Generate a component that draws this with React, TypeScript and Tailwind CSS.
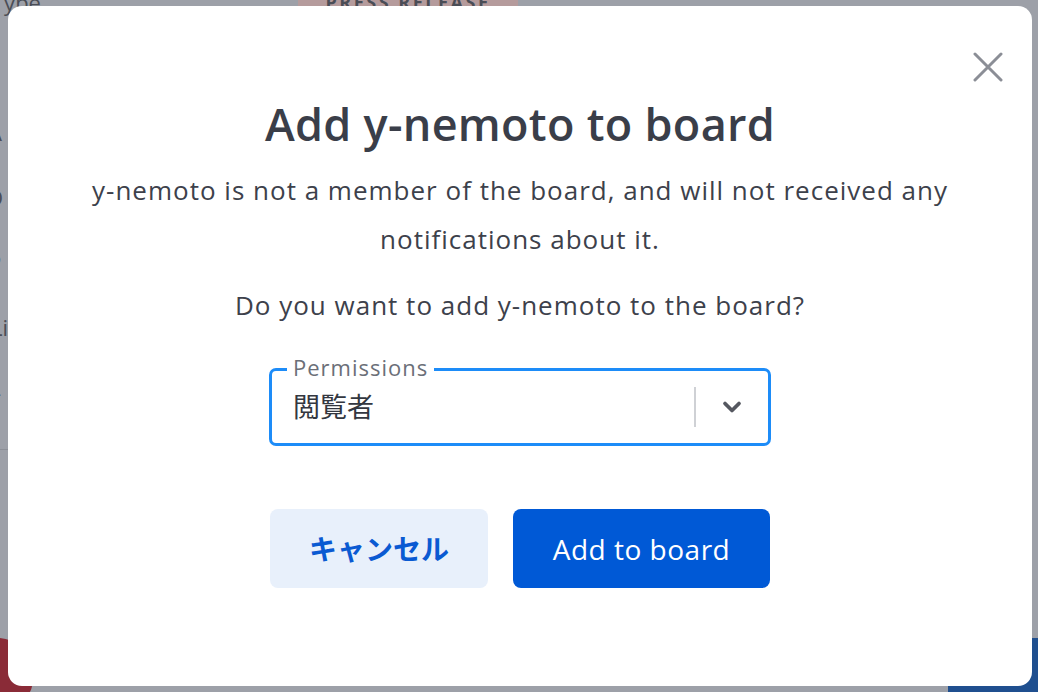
import React from "react";

const fontStack = '"Open Sans", "Noto Sans CJK JP", sans-serif';

function CloseIcon() {
  return (
    <svg width="30" height="30" viewBox="0 0 30 30" fill="none" aria-hidden>
      <path d="M2 2 L28 28 M28 2 L2 28" stroke="#8b8e96" strokeWidth="3" strokeLinecap="round" />
    </svg>
  );
}

function Chevron() {
  return (
    <svg width="28" height="28" viewBox="0 0 24 24" fill="none" aria-hidden>
      <polyline points="6 9 12 15 18 9" stroke="#555860" strokeWidth="3.2" strokeLinecap="round" strokeLinejoin="round" />
    </svg>
  );
}

function BackgroundPage() {
  return (
    <div className="flex h-full w-full flex-col text-[#4a4d56]">
      <div className="-mt-[14px] flex items-center">
        <div className="w-[298px] shrink-0">
          <span className="-ml-[8px] block text-[22px]">Type</span>
        </div>
        <span className="w-[220px] rounded-[3px] bg-[#b59b9c] py-[2px] text-center text-[18px] font-bold tracking-[0.14em] text-[#4a4d56]">
          PRESS RELEASE
        </span>
      </div>
      <div className="mt-[36px] flex flex-col gap-[40px] text-[22px] leading-[25px]">
        <span className="-ml-[14px]">C</span>
        <span className="-ml-[12px]">A</span>
        <span className="-ml-[14px]">O</span>
        <span className="-ml-[12px]">P</span>
        <span className="-ml-[9px]">Li</span>
        <span className="-ml-[6px]">-</span>
      </div>
      <div className="mt-[44px] h-px w-[40px] bg-[#8c8f97]" />
      <div className="mt-auto flex items-end justify-between">
        <div className="-mb-[20px] -ml-[40px] h-[74px] w-[74px] rounded-full bg-[#8a2b37]" />
        <div className="h-[54px] w-[90px] bg-[#1f4f8f]" />
      </div>
    </div>
  );
}

export default function App() {
  return (
    <div
      className="relative h-[692px] w-[1038px] overflow-hidden bg-[#9da0a8]"
      style={{ fontFamily: fontStack }}
    >
      <BackgroundPage />

      <div className="absolute left-[8px] top-[6px] flex h-[680px] w-[1024px] flex-col items-center rounded-[14px] bg-white pt-[94px]">
        <button type="button" aria-label="Close" className="absolute right-[29px] top-[46px]">
          <CloseIcon />
        </button>

        <h2 className="text-[45px] font-semibold leading-[48px] tracking-[0.3px] text-[#3a3e49]">
          Add y-nemoto to board
        </h2>
        <p className="mt-[18px] max-w-[880px] text-center text-[26px] leading-[49px] tracking-[1px] text-[#3d414b]">
          y-nemoto is not a member of the board, and will not received any notifications about it.
        </p>
        <p className="mt-[17px] text-center text-[26px] leading-[49px] tracking-[1px] text-[#3d414b]">
          Do you want to add y-nemoto to the board?
        </p>

        <div className="relative mt-[38px] flex h-[78px] w-[502px] items-center rounded-[7px] border-[3px] border-[#1d8cf8] pl-[21px]">
          <span className="absolute -top-[16px] left-[15px] bg-white px-[6px] text-[22px] leading-[24px] tracking-[1px] text-[#6b6f78]">
            Permissions
          </span>
          <span className="flex-1 text-[27px] text-[#333740]">閲覧者</span>
          <div className="h-[40px] w-[2px] bg-[#cfd1d5]" />
          <div className="flex w-[72px] items-center justify-center">
            <Chevron />
          </div>
        </div>

        <div className="mt-[63px] flex gap-[25px]">
          <button
            type="button"
            className="h-[79px] w-[218px] rounded-[8px] bg-[#e8f0fb] text-[28px] font-bold text-[#0a5ad2]"
          >
            キャンセル
          </button>
          <button
            type="button"
            className="h-[79px] w-[257px] rounded-[8px] bg-[#0059d6] text-[28px] font-medium tracking-[0.5px] text-white"
          >
            Add to board
          </button>
        </div>
      </div>
    </div>
  );
}
